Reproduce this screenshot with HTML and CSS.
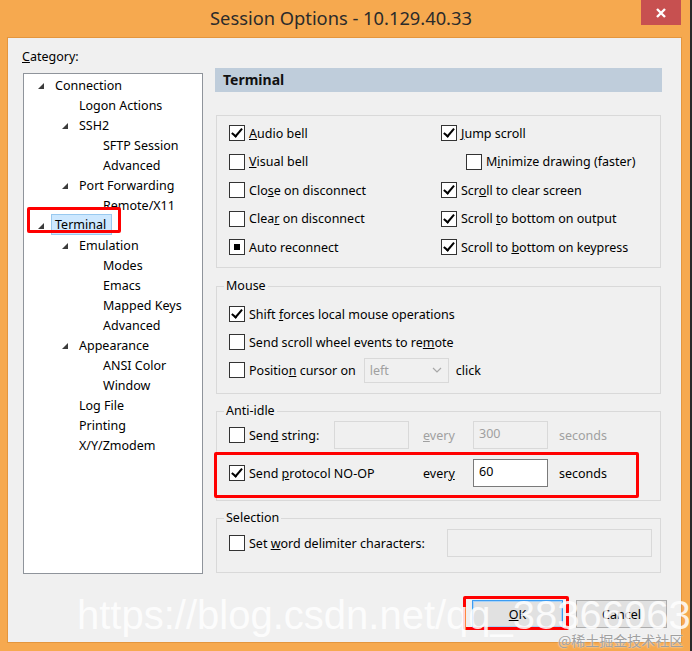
FILE: index.html
```html
<!DOCTYPE html>
<html lang="en">
<head>
    <meta charset="UTF-8">
    <title>Session Options</title>
    <link rel="stylesheet" href="styles.css">
</head>
<body>

<div class="window">

    <!-- Title bar -->
    <div class="titlebar">
        <span class="title">Session Options - 10.129.40.33</span>
        <div class="close">
            <svg width="12" height="12" viewBox="0 0 12 12"><path d="M2 2 L10 10 M10 2 L2 10" stroke="#fff" stroke-width="2.4"/></svg>
        </div>
    </div>

    <div class="content">
        <div class="main">

            <!-- Category tree -->
            <div class="category">
                <div class="cat-label"><u>C</u>ategory:</div>
                <ul class="tree">
                    <li class="l0"><span class="arrow"><i></i></span>Connection</li>
                    <li class="l1"><span class="arrow"></span>Logon Actions</li>
                    <li class="l1"><span class="arrow"><i></i></span>SSH2</li>
                    <li class="l2"><span class="arrow"></span>SFTP Session</li>
                    <li class="l2"><span class="arrow"></span>Advanced</li>
                    <li class="l1"><span class="arrow"><i></i></span>Port Forwarding</li>
                    <li class="l2"><span class="arrow"></span>Remote/X11</li>
                    <li class="l0"><span class="arrow"><i></i></span><span class="sel">Terminal</span></li>
                    <li class="l1"><span class="arrow"><i></i></span>Emulation</li>
                    <li class="l2"><span class="arrow"></span>Modes</li>
                    <li class="l2"><span class="arrow"></span>Emacs</li>
                    <li class="l2"><span class="arrow"></span>Mapped Keys</li>
                    <li class="l2"><span class="arrow"></span>Advanced</li>
                    <li class="l1"><span class="arrow"><i></i></span>Appearance</li>
                    <li class="l2"><span class="arrow"></span>ANSI Color</li>
                    <li class="l2"><span class="arrow"></span>Window</li>
                    <li class="l1"><span class="arrow"></span>Log File</li>
                    <li class="l1"><span class="arrow"></span>Printing</li>
                    <li class="l1"><span class="arrow"></span>X/Y/Zmodem</li>
                </ul>
            </div>

            <!-- Terminal page -->
            <div class="panel">
                <div class="panel-head">Terminal</div>

                <div class="box options">
                    <label class="opt"><span class="cb on"></span><span><u>A</u>udio bell</span></label>
                    <label class="opt"><span class="cb on"></span><span><u>J</u>ump scroll</span></label>
                    <label class="opt"><span class="cb"></span><span><u>V</u>isual bell</span></label>
                    <label class="opt sub"><span class="cb"></span><span>M<u>i</u>nimize drawing (faster)</span></label>
                    <label class="opt"><span class="cb"></span><span>Clo<u>s</u>e on disconnect</span></label>
                    <label class="opt"><span class="cb on"></span><span>Scr<u>o</u>ll to clear screen</span></label>
                    <label class="opt"><span class="cb"></span><span>Clea<u>r</u> on disconnect</span></label>
                    <label class="opt"><span class="cb on"></span><span>Scroll <u>t</u>o bottom on output</span></label>
                    <label class="opt"><span class="cb mixed"></span><span>Auto reconnect</span></label>
                    <label class="opt"><span class="cb on"></span><span>Scroll to <u>b</u>ottom on keypress</span></label>
                </div>

                <fieldset class="group mouse">
                    <legend>Mouse</legend>
                    <label class="opt"><span class="cb on"></span><span>Shift <u>f</u>orces local mouse operations</span></label>
                    <label class="opt"><span class="cb"></span><span>Send scroll wheel events to re<u>m</u>ote</span></label>
                    <div class="opt">
                        <span class="cb"></span><span>Positio<u>n</u> cursor on</span>
                        <span class="select">left
                            <svg width="10" height="6" viewBox="0 0 10 6"><path d="M1 1 L5 5 L9 1" fill="none" stroke="#a8a8a8" stroke-width="1.2"/></svg>
                        </span>
                        <span class="after">click</span>
                    </div>
                </fieldset>

                <fieldset class="group idle">
                    <legend>Anti-idle</legend>
                    <div class="idle-grid">
                        <label class="opt"><span class="cb"></span><span>Sen<u>d</u> string:</span></label>
                        <span class="field off"></span>
                        <span class="word off"><u>e</u>very</span>
                        <span class="field off">300</span>
                        <span class="unit off">seconds</span>

                        <label class="opt wide"><span class="cb on"></span><span>Send <u>p</u>rotocol NO-OP</span></label>
                        <span class="word">ever<u>y</u></span>
                        <span class="field">60</span>
                        <span class="unit">seconds</span>
                    </div>
                </fieldset>

                <fieldset class="group selection">
                    <legend>Selection</legend>
                    <div class="opt">
                        <span class="cb"></span><span>Set <u>w</u>ord delimiter characters:</span>
                        <span class="field off delim"></span>
                    </div>
                </fieldset>
            </div>
        </div>

        <div class="buttons">
            <button class="btn default"><u>O</u>K</button>
            <button class="btn">Cancel</button>
        </div>
    </div>

    <!-- annotations and watermark laid over the screenshot -->
    <div class="note note-tree"></div>
    <div class="note note-noop"></div>
    <div class="note note-ok"></div>
    <div class="mark">https://blog.csdn.net/qq_38366063</div>
    <div class="mark-small">@稀土掘金技术社区</div>
</div>

</body>
</html>
```

FILE: styles.css
```css
body {
    margin: 0;
    font-family: "Noto Sans", "Open Sans", sans-serif;
    font-size: 12.5px;
    color: #000;
}
.window {
    position: relative;
    width: 692px;
    height: 651px;
    box-sizing: border-box;
    background: #f6a94f;
    border-right: 2px solid #2a2a2a;
    overflow: hidden;
}
.titlebar {
    position: relative;
    height: 38px;
    padding-right: 8px;
    text-align: center;
}
.title {
    display: inline-block;
    font-size: 18.3px;
    line-height: 36px;
    color: #2b2b2b;
}
.close {
    position: absolute;
    top: 0;
    left: 641px;
    width: 40px;
    height: 25px;
    background: #c75050;
    display: flex;
    align-items: center;
    justify-content: center;
}
.content {
    margin-left: 8px;
    width: 673px;
    height: 604px;
    box-sizing: border-box;
    background: #f0f0f0;
    padding: 10px 14px 14px 14px;
    box-shadow: 0 0 0 1px #e4963e;
}
.main {
    display: flex;
    gap: 12px;
    margin-right: 5px;
}

/* category tree */
.category {
    width: 181px;
}
.cat-label {
    line-height: 18px;
    margin-bottom: 7px;
}
.tree {
    list-style: none;
    margin: 0 0 0 1px;
    padding: 1px 0 0 0;
    height: 501px;
    box-sizing: border-box;
    background: #fff;
    border: 1px solid #8f949b;
}
.tree li {
    display: flex;
    align-items: center;
    height: 20px;
    white-space: nowrap;
}
.tree .l0 { padding-left: 14px; }
.tree .l1 { padding-left: 38px; }
.tree .l2 { padding-left: 62px; }
.arrow {
    width: 17px;
    height: 20px;
    display: flex;
    align-items: center;
}
.arrow i {
    width: 0;
    height: 0;
    border-left: 6px solid transparent;
    border-bottom: 6px solid #3c3c3c;
    margin-top: 1px;
}
.sel {
    margin-left: -4px;
    margin-top: -2px;
    padding: 0 5px 0 3px;
    line-height: 19px;
    background: #cde8ff;
    border: 1px solid #99c9ef;
}

/* right panel */
.panel {
    width: 447px;
    padding-top: 20px;
}
.panel-head {
    height: 24px;
    line-height: 24px;
    padding-left: 8px;
    background: #bfcddb;
    font-weight: bold;
    font-size: 14px;
    color: #111;
}
.box, .group {
    margin: 0 1px;
    border: 1px solid #d9d9d9;
    box-sizing: border-box;
}
.options {
    margin-top: 23px;
    height: 153px;
    padding: 3px 0 0 12px;
    display: grid;
    grid-template-columns: 212px auto;
    grid-auto-rows: 28.5px;
}
.opt {
    display: flex;
    align-items: center;
    height: 28px;
    white-space: nowrap;
}
.options .opt { height: 28.5px; }
.opt.sub { padding-left: 25px; }
.cb {
    width: 14px;
    height: 14px;
    border: 1px solid #333;
    background: #fff;
    margin-right: 4px;
    flex: none;
    position: relative;
}
.cb.on::after {
    content: "";
    position: absolute;
    left: 4px;
    top: 0;
    width: 4px;
    height: 9px;
    border: solid #000;
    border-width: 0 2px 2px 0;
    transform: rotate(40deg);
}
.cb.mixed::after {
    content: "";
    position: absolute;
    left: 4px;
    top: 4px;
    width: 6px;
    height: 6px;
    background: #000;
}

fieldset.group {
    min-width: 0;
    padding: 0 12px;
}
.group legend {
    margin-left: -5px;
    padding: 0 2px;
    line-height: 18px;
}
.mouse {
    margin-top: 9px;
    padding: 5px 12px 9px 12px !important;
}
.select {
    display: inline-flex;
    align-items: center;
    justify-content: space-between;
    width: 85px;
    height: 25px;
    box-sizing: border-box;
    margin-left: 8px;
    padding: 0 6px 0 5px;
    border: 1px solid #d9d9d9;
    color: #a0a0a0;
}
.after {
    margin-left: 7px;
}
.idle {
    margin-top: 8px;
    padding: 0 12px 12px 12px !important;
}
.idle-grid {
    display: grid;
    grid-template-columns: 105px 75px 64px 75px auto;
    grid-auto-rows: 30px;
    row-gap: 8px;
    align-items: center;
}
.idle-grid .opt { height: 30px; }
.idle-grid .wide { grid-column: 1 / 3; }
.idle-grid .word { grid-column: 3; padding-left: 14px; }
.field {
    height: 28px;
    box-sizing: border-box;
    border: 1px solid #7a7a7a;
    background: #fff;
    padding: 2px 5px;
    line-height: 20px;
}
.field.off {
    border-color: #d9d9d9;
    background: #f0f0f0;
    color: #a0a0a0;
}
.word.off, .unit.off {
    color: #a0a0a0;
}
.unit {
    padding-left: 11px;
}
.selection {
    margin-top: 8px;
    padding: 1px 8px 14px 12px !important;
}
.selection .opt { height: 30px; }
.delim {
    margin-left: auto;
    width: 205px;
}

/* dialog buttons */
.buttons {
    display: flex;
    justify-content: flex-end;
    gap: 13px;
    margin-top: 26px;
}
.btn {
    width: 91px;
    height: 28px;
    font-family: inherit;
    font-size: 12.5px;
    background: #e1e1e1;
    border: 1px solid #adadad;
    padding: 0;
}
.btn.default {
    border-color: #3c9cf1;
    box-shadow: inset 0 0 0 1px #a9d2f7;
}

/* red annotation frames */
.note {
    position: absolute;
    border: 3px solid #f00;
    border-radius: 2px;
    box-sizing: border-box;
}
.note-tree { left: 27px; top: 207px; width: 94px; height: 26px; }
.note-noop { left: 214px; top: 452px; width: 425px; height: 46px; }
.note-ok { left: 463px; top: 596px; width: 106px; height: 34px; }

/* watermark */
.mark {
    position: absolute;
    left: 77px;
    top: 595px;
    font-family: "Liberation Sans", Arial, sans-serif;
    font-size: 40px;
    line-height: 40px;
    color: rgba(255, 255, 255, 0.85);
    white-space: nowrap;
}
.mark-small {
    position: absolute;
    left: 558px;
    top: 631px;
    font-family: "Noto Sans CJK SC", sans-serif;
    font-size: 14px;
    line-height: 18px;
    color: #a0a0a0;
    text-shadow: 0 0 2px #fff;
    white-space: nowrap;
}
```
